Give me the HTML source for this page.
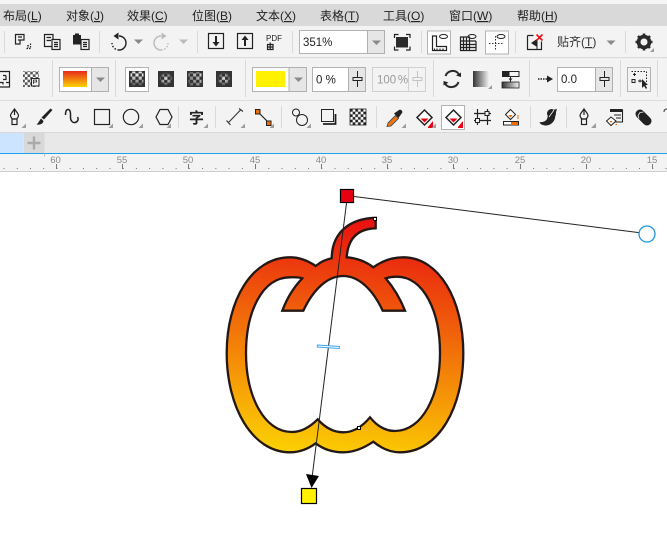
<!DOCTYPE html>
<html><head><meta charset="utf-8"><style>
html,body{margin:0;padding:0;background:#fff;width:667px;height:537px;overflow:hidden}
svg{display:block}
.m{font:12px "Liberation Sans","Noto Sans CJK SC",sans-serif;fill:#222}
.r{font:9.5px "Liberation Sans",sans-serif;fill:#8a8a8a;text-anchor:middle}
.v{font:11.5px "Liberation Sans",sans-serif;fill:#222}
.i{fill:none;stroke:#222;stroke-width:1.2}
.k{fill:#222;stroke:none}
.t{fill:#8a8a8a}
.u{fill:#9c9c9c}
.sep{fill:#d9d9d9}
.g{fill:#e6e6e6;stroke:#b0b0b0}
</style></head><body>
<svg width="667" height="537" viewBox="0 0 667 537" xmlns="http://www.w3.org/2000/svg">
<defs>
<linearGradient id="pg" gradientUnits="userSpaceOnUse" x1="347" y1="196" x2="309" y2="496"><stop offset="0" stop-color="#e60012"/><stop offset="1" stop-color="#fff100"/></linearGradient>
<linearGradient id="sg" x1="0" y1="0" x2="0" y2="1"><stop offset="0" stop-color="#e62a1c"/><stop offset="1" stop-color="#fcd400"/></linearGradient>
<linearGradient id="bg" x1="0" y1="0" x2="1" y2="0"><stop offset="0" stop-color="#333"/><stop offset="1" stop-color="#f2f2f2"/></linearGradient>
<pattern id="ch" x="1" y="3" width="6.4" height="6.4" patternUnits="userSpaceOnUse"><rect width="6.4" height="6.4" fill="#333"/><rect width="3.2" height="3.2" fill="#eee"/><rect x="3.2" y="3.2" width="3.2" height="3.2" fill="#eee"/></pattern>
<pattern id="ch3" x="350" y="109" width="5.33" height="5.33" patternUnits="userSpaceOnUse"><rect width="5.33" height="5.33" fill="#222"/><rect x="2.67" width="2.67" height="2.67" fill="#fff"/><rect y="2.67" width="2.67" height="2.67" fill="#fff"/></pattern>
<linearGradient id="fd1" x1="0" y1="0" x2="0" y2="1"><stop offset="0" stop-color="#333" stop-opacity="0"/><stop offset=".35" stop-color="#333" stop-opacity=".1"/><stop offset="1" stop-color="#333" stop-opacity=".95"/></linearGradient>
<radialGradient id="fd2"><stop offset="0" stop-color="#333" stop-opacity=".05"/><stop offset=".5" stop-color="#333" stop-opacity=".45"/><stop offset=".85" stop-color="#333" stop-opacity="1"/></radialGradient>
<linearGradient id="fd3" x1="1" y1="0" x2="0" y2="1"><stop offset="0" stop-color="#333" stop-opacity="0"/><stop offset="1" stop-color="#333" stop-opacity=".85"/></linearGradient>
</defs>

<!-- chrome background -->
<rect width="667" height="4" fill="#f5f5f5"/>
<rect y="4" width="667" height="22" fill="#d9d9d9"/>
<rect y="26" width="667" height="75" fill="#f3f3f3"/>
<rect y="57" width="667" height="1.2" fill="#dcdcdc"/>
<rect y="100" width="667" height="1.2" fill="#dcdcdc"/>
<rect y="101" width="667" height="31" fill="#f3f3f3"/>
<rect y="132" width="667" height="1" fill="#d8d8d8"/>
<rect y="133" width="667" height="20" fill="#e8e8e8"/>
<rect y="133" width="23.5" height="20" fill="#cce4ff"/>
<rect x="24" y="133" width="20.5" height="20" fill="#d9d9d9"/>
<path d="M27.5 143h13M34 136.5v13" stroke="#aaa" stroke-width="2.4" fill="none"/>
<rect y="153" width="667" height="1.2" fill="#1ea3ea"/>
<rect y="154" width="667" height="17" fill="#f3f3f3"/>
<rect y="171" width="667" height="1" fill="#cfcfcf"/>

<!-- menu -->
<text class="m" x="3" y="20">布局(<tspan text-decoration="underline">L</tspan>)</text>
<text class="m" x="66" y="20">对象(<tspan text-decoration="underline">J</tspan>)</text>
<text class="m" x="127" y="20">效果(<tspan text-decoration="underline">C</tspan>)</text>
<text class="m" x="192" y="20">位图(<tspan text-decoration="underline">B</tspan>)</text>
<text class="m" x="256" y="20">文本(<tspan text-decoration="underline">X</tspan>)</text>
<text class="m" x="320" y="20">表格(<tspan text-decoration="underline">T</tspan>)</text>
<text class="m" x="383" y="20">工具(<tspan text-decoration="underline">O</tspan>)</text>
<text class="m" x="449" y="20">窗口(<tspan text-decoration="underline">W</tspan>)</text>
<text class="m" x="517" y="20">帮助(<tspan text-decoration="underline">H</tspan>)</text>

<!-- row 1 separators -->
<g class="sep"><rect x="4" y="31" width="1" height="22"/><rect x="99" y="31" width="1" height="22"/><rect x="197" y="31" width="1" height="22"/><rect x="292" y="31" width="1" height="22"/><rect x="421" y="31" width="1" height="22"/><rect x="515" y="31" width="1" height="22"/><rect x="625" y="31" width="1" height="22"/></g>
<!-- row 1 icons -->
<path class="k" d="M73 35h2v-1.500h4v1.500h2v9.500h-8z"/>
<g class="i">
<path d="M15.500 34.500h8.500v5.500h-4v4h-4.500zM18 37h4M18 40h1.500"/>
<path d="M30.500 43.500v5h-5" stroke-dasharray="1.500 1"/><path d="M27 45.500h2M27 47h2" stroke-width=".8"/>
<path d="M44.500 34.500h8.500v12h-8.500zM46.500 37.500h4.500M46.500 40.500h4.500"/>
<rect x="52" y="39.500" width="8" height="10" fill="#f3f3f3"/><path d="M54 42.500h4M54 44.500h4M54 46.500h4"/>
<rect x="81" y="39.500" width="8" height="10" fill="#f3f3f3"/><path d="M83 42.500h4M83 44.500h4M83 46.500h4"/>
</g>
<path d="M119 36a7 7 0 0 1 0 14" fill="none" stroke="#222" stroke-width="1.400"/>
<path d="M119 50a7 7 0 0 1-7-7" fill="none" stroke="#222" stroke-width="1.400" stroke-dasharray="1.600 1.600"/>
<path class="k" d="M113.500 36l5-3.500v7z"/>
<path class="t" d="M134 39.500h9l-4.500 4.500z"/>
<path d="M161 36a7 7 0 0 0 0 14" fill="none" stroke="#bbb" stroke-width="1.400"/>
<path d="M161 50a7 7 0 0 0 7-7" fill="none" stroke="#bbb" stroke-width="1.400" stroke-dasharray="1.600 1.600"/>
<path d="M166.500 36l-5-3.500v7z" fill="#bbb"/>
<path d="M179 39.500h9l-4.500 4.500z" fill="#bbb"/>
<g class="i"><rect x="208.500" y="33.500" width="15" height="15"/><rect x="237.500" y="33.500" width="15" height="15"/></g>
<path class="k" d="M215 36h2v6h2.500l-3.500 4.500-3.500-4.500h2.500z"/>
<path class="k" d="M244 46h2v-6h2.500l-3.500-4.500-3.500 4.500h2.500z"/>
<text x="266" y="41" style="font:8px 'Liberation Sans',sans-serif;fill:#222">PDF</text>
<path class="i" stroke-width="1" d="M267.500 44.500h5.500v5h-5.500zM270.200 42.500v7M267.500 47h5.500"/>
<rect x="299.500" y="30.500" width="68" height="23" fill="#fff" stroke="#b3b3b3"/>
<rect x="367.500" y="30.500" width="17" height="23" class="g"/>
<text class="v" x="303" y="46">351%</text>
<path class="t" d="M372 40.500h9l-4.500 4.500z"/>
<rect x="396" y="37" width="12" height="10.500" fill="#2b2b2b"/>
<path class="i" d="M394.500 38v-3.500h4M410 38v-3.500h-4M394.500 46.500v3.500h4M410 46.500v3.500h-4"/>
<rect x="427.500" y="31" width="23" height="23" fill="#fff" stroke="#b3b3b3"/>
<path class="i" d="M432.500 36v14.500h14v-4h-10v-10.500zM434.500 48.500v2M437 48.500v2M440 48.500v2M443 48.500v2"/>
<ellipse cx="443.500" cy="36.500" rx="4" ry="2" fill="none" stroke="#222"/>
<path class="i" d="M460.500 37h9v13.500h-9zM463.500 37v13.500M466.500 37v13.500M460.500 41h15.500M460.500 44.500h15.500M460.500 47.500h15.500M469.500 41v9.500h6.500v-9.500" stroke-width="1"/>
<ellipse cx="472" cy="36.500" rx="4" ry="2" fill="none" stroke="#222"/>
<rect x="485.500" y="31" width="23" height="23" fill="#fff" stroke="#b3b3b3"/>
<path d="M495.500 36v14M489 43.500h15" fill="none" stroke="#333" stroke-dasharray="1.500 1.500"/>
<ellipse cx="501" cy="36.500" rx="4" ry="2" fill="none" stroke="#222"/>
<path class="i" d="M527.500 35.500h6M527.500 35.500v14h14v-8"/>
<path class="k" d="M531 43l6-4v8z"/><path d="M537 40v9" stroke="#222"/>
<path d="M536.500 34.500l6 6M542.500 34.500l-6 6" stroke="#e8141a" stroke-width="1.600"/>
<text class="m" x="557" y="46" style="fill:#333">贴齐(<tspan text-decoration="underline">T</tspan>)</text>
<path class="t" d="M606.500 40.500h9l-4.500 4.500z"/>
<g transform="translate(644 42)"><circle r="5.500" fill="none" stroke="#2b2b2b" stroke-width="3.600"/><path d="M0-8.500V8.500M-8.500 0H8.500M-6-6L6 6M6-6L-6 6" stroke="#2b2b2b" stroke-width="2.600"/><circle r="3.500" fill="#f3f3f3"/></g>
<path class="u" d="M654 52v-4l-4 4z"/>

<!-- row 2 separators -->
<g class="sep"><rect x="52" y="60" width="1" height="37"/><rect x="115" y="60" width="1" height="37"/><rect x="245" y="60" width="1" height="37"/><rect x="433" y="60" width="1" height="37"/><rect x="529" y="60" width="1" height="37"/><rect x="620" y="60" width="1" height="37"/><rect x="657" y="60" width="1" height="37"/></g>
<!-- row 2 left icons -->
<path class="i" d="M-1 71.500h10.500v15.500H-1M3 75.500h3M6 75.500v4h-3M0 82.500h3v2M6 82.500h3" stroke-width="1.100"/>
<rect x="23" y="71" width="16" height="16" fill="url(#ch3)" opacity=".75"/>
<rect x="31.500" y="78.500" width="7.500" height="7.500" fill="#f3f3f3" stroke="#222"/><path d="M33.500 84v-4h3v2h-3" fill="none" stroke="#222" stroke-width=".8"/>
<rect x="59.500" y="67.500" width="49" height="24" fill="#fff" stroke="#b3b3b3"/>
<rect x="91.500" y="67.500" width="17" height="24" class="g"/>
<rect x="63" y="71" width="24" height="16" fill="url(#sg)"/>
<path class="t" d="M96 77.500h9l-4.500 4.500z"/>
<rect x="125.500" y="67.500" width="23" height="24" fill="#fff" stroke="#b3b3b3"/>
<rect x="129" y="71" width="16" height="16" fill="#333"/>
<rect x="130.500" y="71.500" width="13" height="14" fill="url(#ch)"/>
<rect x="129" y="71" width="16" height="16" fill="url(#fd1)"/>
<rect x="158" y="71" width="16" height="16" fill="#333"/>
<rect x="159.500" y="72.500" width="13" height="13" fill="url(#ch)"/>
<rect x="158" y="71" width="16" height="16" fill="url(#fd2)"/>
<rect x="187" y="71" width="16" height="16" fill="#333"/>
<rect x="188.500" y="72.500" width="13" height="13" fill="url(#ch)"/>
<rect x="187" y="71" width="16" height="16" fill="url(#fd3)"/>
<rect x="216" y="71" width="16" height="16" fill="#333"/>
<rect x="217.500" y="72.500" width="13" height="13" fill="url(#ch)"/>
<rect x="216" y="71" width="16" height="16" fill="url(#fd2)"/>
<rect x="252.500" y="67.500" width="54" height="24" fill="#fff" stroke="#b3b3b3"/>
<rect x="289" y="67.500" width="17.500" height="24" class="g"/>
<rect x="256" y="71" width="29" height="16" fill="#fff100"/>
<path class="t" d="M294 77.500h9l-4.500 4.500z"/>
<rect x="312.500" y="67.500" width="53" height="24" fill="#fff" stroke="#b3b3b3"/>
<rect x="348.500" y="67.500" width="17" height="24" class="g"/>
<text class="v" x="316" y="83.500">0 %</text>
<path d="M357.500 71v6.500M357.500 81v6M353 77.500h9v3h-9z" stroke="#222" fill="none"/>
<rect x="372.500" y="67.500" width="53" height="24" fill="#f3f3f3" stroke="#d0d0d0"/>
<path d="M408.500 67.500v24" stroke="#d0d0d0"/>
<text class="v" x="377" y="83.500" style="fill:#9a9a9a;word-spacing:-1.500px">100 %</text>
<path d="M417.500 71v6.500M417.500 81v6M413 77.500h9v3h-9z" stroke="#c4c4c4" fill="none"/>
<path d="M445.500 76a7.500 7.500 0 0 1 13.500-1.500M458.500 82a7.500 7.500 0 0 1-13.500 1.500" fill="none" stroke="#2b2b2b" stroke-width="2"/>
<path class="k" d="M456 75.500l5-3v4.500zM448.500 82.500l-5 3v-4.500z"/>
<rect x="473" y="71" width="16" height="16" fill="url(#bg)"/>
<path class="u" d="M492 89v-4l-4 4z"/>
<rect x="502" y="71" width="7" height="6" fill="#222"/><rect x="509" y="71.500" width="10" height="5" fill="#f3f3f3" stroke="#222"/>
<path d="M510.500 77v5" stroke="#222"/><path d="M508.500 78.500h4l-2 2.500z" fill="#222"/>
<rect x="502" y="82" width="17" height="6" fill="url(#bg)" stroke="#222" stroke-width=".8"/>
<path d="M538 79h9" stroke="#222" stroke-width="1.500" stroke-dasharray="1.500 1"/>
<path class="k" d="M547 75.500l6 3.500-6 3.500z"/>
<rect x="557.500" y="67.500" width="55" height="24" fill="#fff" stroke="#b3b3b3"/>
<rect x="595.500" y="67.500" width="17" height="24" class="g"/>
<text class="v" x="561" y="83">0.0</text>
<path d="M604.500 71v6.500M604.500 81v6M600 77.500h9v3h-9z" stroke="#222" fill="none"/>
<rect x="627.500" y="67.500" width="23" height="24" fill="#f3f3f3" stroke="#b3b3b3"/>
<path d="M631.500 71.500h15v11" fill="none" stroke="#222" stroke-dasharray="1.500 1.500"/>
<path d="M633 74.500h3M634.500 73v3M632 79.500h3v3h-3zM638 81h4M640 79.500v3" stroke="#222" fill="none"/>
<path class="k" d="M642 79v9l2-2 2 3 1-1-1.500-3h2.500z"/>

<!-- row 3 separators -->
<g class="sep"><rect x="178" y="106" width="1" height="22"/><rect x="215" y="106" width="1" height="22"/><rect x="281" y="106" width="1" height="22"/><rect x="376" y="106" width="1" height="22"/><rect x="530" y="106" width="1" height="22"/><rect x="566" y="106" width="1" height="22"/></g>
<!-- row 3 icons -->
<g class="i" stroke-width="1.300">
<path d="M14.500 109c-2 3-4 5-4 6.500 0 1.500 2 3.500 2 3.500h4s2-2 2-3.500c0-1.500-2-3.500-4-6.500zM14.500 110v5"/>
<rect x="12" y="119" width="5" height="5.500"/>
</g>
<path class="k" d="M50.500 108.500l2 1.500-8.500 9.500-2.500-2zM41 118.500l2.500 2.500c-.5 3-3.500 4-7 3.500 1.500-1 3-4 4.500-6z"/>
<path d="M65.500 115c0-3 .5-5.500 2.500-5.500 3 0 2.500 5 2.500 8 0 3 2 5.500 4.500 5 2.500-.5 4-3 2.500-5.500" fill="none" stroke="#222" stroke-width="1.500"/>
<rect x="94.500" y="109.500" width="15" height="15" fill="none" stroke="#222" stroke-width="1.200"/>
<circle cx="131" cy="117" r="7.700" fill="none" stroke="#222" stroke-width="1.200"/>
<path d="M156 117l4-7.500h8l4 7.500-4 7.500h-8z" fill="none" stroke="#222" stroke-width="1.200"/>
<text x="189" y="123" style="font:bold 15px 'Liberation Sans','Noto Sans CJK SC',sans-serif;fill:#222">字</text>
<path d="M228 123l13-13.500M226.500 120.500l4 4.500M239 108.500l4 3" fill="none" stroke="#333" stroke-width="1.100"/>
<path d="M258 112l11 11" stroke="#222" stroke-width="1.200"/>
<rect x="255.500" y="109.500" width="4.500" height="4.500" fill="#f26a00" stroke="#222"/>
<rect x="266.500" y="121" width="4.500" height="4.500" fill="#f26a00" stroke="#222"/>
<circle cx="296" cy="112.500" r="3.500" fill="none" stroke="#222"/><circle cx="302" cy="120" r="5.500" fill="#f3f3f3" stroke="#222"/>
<rect x="321.500" y="109.500" width="12" height="12" fill="#f3f3f3" stroke="#222"/><path d="M323 124h12.500v-10" stroke="#222" stroke-width="1.800" fill="none"/>
<rect x="350" y="109" width="16" height="16" fill="url(#ch3)" stroke="#222" stroke-width=".8"/>
<path d="M387 126.500l1-3.500 7.500-7.500 3 3-7.500 7.500z" fill="#e8751a" stroke="#444" stroke-width=".8"/>
<path class="k" d="M394 113.500l5-3.500c1.500-1.500 4.500 1.500 3 3l-3.500 5z"/>
<path d="M424.500 110l7.500 7.500-7.500 7.500-7.500-7.500z" fill="#fff" stroke="#222" stroke-width="1.500"/>
<path d="M420.500 118.500h8l-4 4z" fill="#e60012"/>
<path d="M428 128v-1l5-6v7z" fill="#e60012"/>
<rect x="441.500" y="105.500" width="23" height="24" fill="#fff" stroke="#b3b3b3"/>
<path d="M453.500 110l7.500 7.500-7.500 7.500-7.500-7.500z" fill="#fff" stroke="#222" stroke-width="1.500"/>
<path d="M449.500 118.500h8l-4 4z" fill="#e60012"/>
<path d="M458 128v-1l5-6v7z" fill="#e60012"/>
<path d="M477.500 109v16M487.500 109v16M474 113.500h17M474 120.500h17" fill="none" stroke="#222" stroke-width="1.200"/>
<rect x="485" y="111.500" width="4" height="4" fill="#f3f3f3" stroke="#222"/><rect x="475.500" y="118.500" width="4" height="4" fill="#f3f3f3" stroke="#222"/>
<path d="M510.500 109.500l5 5-5 5-5-5z" fill="#fff" stroke="#222"/><path d="M508.500 115h4l-2 2.500z" fill="#f26a00"/>
<rect x="503.500" y="121.500" width="15" height="3.500" fill="#fff" stroke="#222"/><rect x="511" y="122" width="7" height="3" fill="#f26a00"/>
<path d="M518 115v4" stroke="#f26a00"/>
<path class="k" d="M539.500 122c3 .5 6-.5 7.500-3 1-2 .5-4 1.500-5.500l6-4 2.500-.5-1 3-1 6c-1 5-6 8-10 7.500-3-.5-5-1.500-5.500-3.500z"/>
<circle cx="551.500" cy="113.500" r="4.500" fill="#222"/><path d="M549 117l5-7" stroke="#f3f3f3" stroke-width=".8"/>
<g class="i" stroke-width="1.300">
<path d="M584 109c-2 3-4 5-4 6.500 0 1.500 2 3.500 2 3.500h4s2-2 2-3.500c0-1.500-2-3.500-4-6.500zM584 110v5"/>
<rect x="581.500" y="119" width="5" height="5.500"/>
</g>
<path class="u" d="M596 128v-5l-5 5z"/>
<path d="M612 110h10.500v12h-7" fill="none" stroke="#222" stroke-width="1.100"/><rect x="610" y="109" width="12.500" height="3" fill="#222"/><path d="M614 115h7M616 118h5" stroke="#222"/>
<path d="M611 117l5 4-5 4.500-4.500-4.500z" fill="#fff" stroke="#222"/><path d="M609.500 121h3l-1.500 2z" fill="#f26a00"/>
<path d="M615.500 124.500h1.500" stroke="#f26a00"/>
<path d="M640 114l7 7" stroke="#222" stroke-width="9" stroke-linecap="round"/>
<path d="M642 110.500l-3.500 .5-2 3 1 3" stroke="#f3f3f3" fill="none" stroke-width=".8" transform="translate(1.500 1.500)"/>
<path d="M664 112c0-2 1-3 3-3" stroke="#555" fill="none" stroke-width="1.200"/>
<!-- small triangles -->
<g class="u">
<path d="M26 128v-4.500l-4.500 4.500zM113 128v-4.500l-4.500 4.500zM143 128v-4.500l-4.500 4.500zM171 128v-4.500l-4.500 4.500zM208 128v-4.500l-4.500 4.500zM245 128v-4.500l-4.500 4.500zM274 128v-4.500l-4.500 4.500zM311 128v-4.500l-4.500 4.500zM406 128v-4.500l-4.500 4.500zM436 128v-4.500l-4.500 4.500z"/>
</g>

<!-- ruler -->
<g class="r"><text x="55.500" y="163">60</text><text x="122" y="163">55</text><text x="188" y="163">50</text><text x="255" y="163">45</text><text x="321" y="163">40</text><text x="387" y="163">35</text><text x="453" y="163">30</text><text x="520" y="163">25</text><text x="586" y="163">20</text><text x="652" y="163">15</text></g>
<g stroke="#777" stroke-width="1"><path d="M56.500 164v5M122.500 164v5M188.500 164v5M255.500 164v5M321.500 164v5M387.500 164v5M453.500 164v5M520.500 164v5M586.500 164v5M652.500 164v5"/></g>
<path d="M0 168.500H667" stroke="#777" stroke-width="1" stroke-dasharray="1 12.240" stroke-dashoffset="-3.500"/>
<path d="M44.500 153.500v3" stroke="#bbb"/>

<!-- pumpkin -->
<path fill="url(#pg)" fill-rule="evenodd" stroke="#231815" stroke-width="2.300" stroke-linejoin="miter" d="M375.700 217.800C350 218.500 332 232 331.700 258.300C325 259.500 320 262.500 315.700 266C307 260 299 257.300 290 257.300C252 257.300 226.700 300 226.700 353C226.700 407 252 452.300 290 452.300C299 452.300 308 449 315.700 443.300C323 449 333 452.300 343.300 452.300C354 452.300 364 448 373.300 441.700C381 448 390 452.300 400 452.300C439 452.300 463.300 407 463.300 353C463.300 300 439 257.300 403.300 257.300C392 257.300 382 261 373.300 267.300C365 261 356 258 346.700 257.300C348 238 358 228.800 375.700 228.300Z
M302.300 278.300C298 276.800 294 277.300 290 277.300C262 277.300 246 312 246 353C246 396 264 432 291.700 432C301 432 310 427 317.700 419.300C325 427.500 334 432.300 343.300 432.300C353 432.300 362 427 370 417.300C377 426 385 431 395 431C422 431 440 396 440 353C440 312 424 276.700 396.700 276.700C392 276.700 389 277.300 385.700 278.300C393 287 400 298 405 310.700H382.700C373 290 359 276 343.300 276C327 276 313 290 303.300 310.700H282.300C287 298 294 287 302.300 278.300Z"/>
<!-- gradient vector -->
<path d="M354 196.500L646 233.500" stroke="#222" stroke-width="1"/>
<path d="M346.500 203L312 478" stroke="#222" stroke-width="1"/>
<path d="M306 474l13 2-7.500 12z" fill="#000"/>
<rect x="340.500" y="189.500" width="13" height="13" fill="#e60012" stroke="#000" stroke-width="1.200"/>
<rect x="301.500" y="488.500" width="15" height="15" fill="#fff100" stroke="#000" stroke-width="1.200"/>
<circle cx="647" cy="234" r="8" fill="#fff" stroke="#1e96e0" stroke-width="1.300"/>
<path d="M317.500 345l22 1.500-.2 2-22-1.500z" fill="#fff" stroke="#3da5ee" stroke-width="1"/>
<rect x="373.500" y="217.500" width="3" height="3" fill="#fff" stroke="#000"/>
<rect x="357.500" y="426.500" width="3" height="3" fill="#fff" stroke="#000"/>
</svg>
</body></html>
